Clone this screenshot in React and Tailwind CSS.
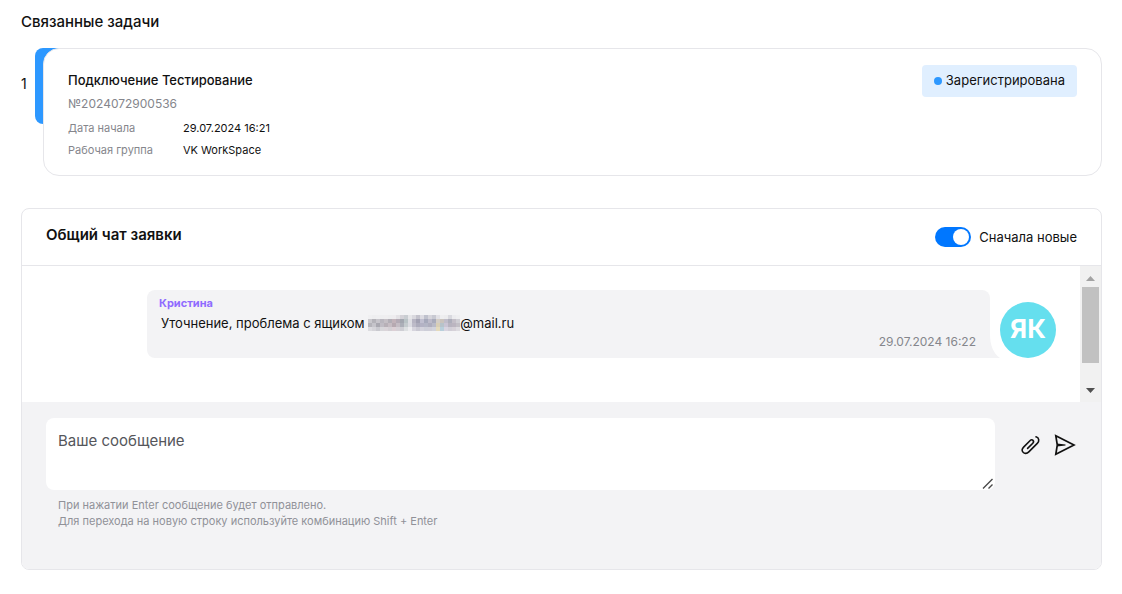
import { useState } from 'react';

const task = {
  title: 'Подключение Тестирование',
  number: '№2024072900536',
  status: 'Зарегистрирована',
  fields: [
    { label: 'Дата начала', value: '29.07.2024 16:21' },
    { label: 'Рабочая группа', value: 'VK WorkSpace' },
  ],
};

// mosaic that hides the first part of the address, 4px cells
const mosaic = [
  ['#f0f0f2', '#eeeef0', '#efeff1', '#eeeef0', '#efeef0', '#ededef', '#eeecef', '#e4e2e6', '#d4d2d8', '#c9cdd2', '#e6e6e9', '#d9d8de', '#c3c2cc', '#dcdbe2', '#bfc1cd', '#d6d5dc', '#c8c9d2', '#e2e1e6', '#eeeef0', '#ececee', '#d9d9df', '#ececef', '#efeff1'],
  ['#c9c8cd', '#b4b3b9', '#c6c4ca', '#b9b6be', '#c4bfc5', '#b2aeb6', '#c2b3ba', '#b3aab5', '#a3a7b0', '#b9c3c6', '#dedee3', '#b7b5c3', '#a2a1b2', '#c0bfd0', '#a6a9bb', '#bcbac9', '#a9abbb', '#d3cdc6', '#c9c3bd', '#bfbcc9', '#adaebb', '#c3bec7', '#cfced4'],
  ['#b5b4ba', '#c5c4ca', '#a9a8b0', '#c0bcc4', '#b7b0b7', '#c6bcc3', '#b6a9b1', '#c4bcc4', '#acafb8', '#c4cbce', '#dcdce2', '#bdbbc8', '#adacbc', '#b3b2c4', '#b3b5c5', '#aeadbd', '#b9bac7', '#d8ceb6', '#b7c3ca', '#c9c4d4', '#b7b3bf', '#bbb5c0', '#c2bfc6'],
  ['#dcdce0', '#d5d4d9', '#c9c9cf', '#d7d6da', '#dad4d9', '#d3cfd4', '#dccfd5', '#d5d0d6', '#ceced4', '#dde0e2', '#ededf0', '#d6d4dd', '#cac9d3', '#d3d2dc', '#cdced8', '#cfced8', '#d2d3dc', '#e4dabc', '#b8cfdb', '#d8d4e0', '#d1ced7', '#d6d1d8', '#dddbe0'],
];

function HiddenLogin() {
  return (
    <svg width="92" height="16" viewBox="0 0 92 16" className="shrink-0" aria-hidden="true">
      {mosaic.map((row, y) =>
        row.map((color, x) => (
          <rect key={`${x}-${y}`} x={x * 4} y={y * 4} width="4" height="4" fill={color} />
        ))
      )}
    </svg>
  );
}

function TaskCard({ index }) {
  return (
    <div className="flex">
      <span className="w-[22px] shrink-0 pt-[26px] text-sm leading-5">{index}</span>
      <div className="relative min-w-0 flex-1">
        <div className="absolute top-0 -left-2 h-[76px] w-8 rounded-lg rounded-br-none bg-[#2d98ff]" />
        <div className="relative flex items-start justify-between rounded-2xl border border-[#e6e6ea] bg-white px-6 pt-4 pb-[15px]">
          <div>
            <h3 className="pt-[5px] text-[13px] leading-5 font-medium">{task.title}</h3>
            <p className="mt-1 text-xs leading-5 text-[#85868c]">{task.number}</p>
            <dl className="mt-1 flex flex-col gap-[2px] text-[11px] leading-5">
              {task.fields.map((field) => (
                <div key={field.label} className="flex">
                  <dt className="w-[115px] text-[#85868c]">{field.label}</dt>
                  <dd>{field.value}</dd>
                </div>
              ))}
            </dl>
          </div>
          <span className="flex h-8 items-center gap-1 rounded bg-[#e0efff] px-3 text-[13px]">
            <span className="h-2 w-2 rounded-full bg-[#2d98ff]" />
            {task.status}
          </span>
        </div>
      </div>
    </div>
  );
}

function Toggle({ checked, onChange, children }) {
  return (
    <label className="flex cursor-pointer items-center gap-2 text-[13px] leading-5">
      <input
        type="checkbox"
        role="switch"
        checked={checked}
        onChange={onChange}
        className="peer sr-only"
      />
      <span className="flex h-5 w-9 items-center justify-start rounded-full bg-[#c4c8cc] p-[2px] peer-checked:justify-end peer-checked:bg-[#0077ff]">
        <span className="h-4 w-4 rounded-full bg-white" />
      </span>
      {children}
    </label>
  );
}

function Message() {
  return (
    <div className="flex flex-1 items-end self-start pt-6 pr-6 pl-[125px]">
      <div className="relative mr-[10px] flex h-[68px] min-w-0 flex-1 flex-col rounded-lg rounded-br-none bg-[#f3f3f5] pt-1 pr-[14px] pl-3">
        <p className="text-[11px] leading-[18px] font-bold text-[#8f6bff]">Кристина</p>
        <p className="flex items-center pl-[2px] text-[13px] leading-[22px]">
          <span>Уточнение, проблема с ящиком&nbsp;</span>
          <HiddenLogin />
          <span>@mail.ru</span>
        </p>
        <time className="self-end text-xs leading-4 text-[#85868c]">29.07.2024 16:22</time>
        <svg
          width="10"
          height="24"
          viewBox="0 0 10 24"
          className="absolute bottom-0 left-full"
          aria-hidden="true"
        >
          <path d="M0 0C0 11 3 19 10 24H0Z" fill="#f3f3f5" />
        </svg>
      </div>
      <div className="flex h-14 w-14 shrink-0 items-center justify-center rounded-full bg-[#65dfee] pb-1 text-[26px] font-bold text-white">
        ЯК
      </div>
    </div>
  );
}

function Scrollbar() {
  return (
    <div className="flex w-[21px] shrink-0 flex-col items-center bg-[#f1f1f1]">
      <button type="button" aria-label="Вверх" className="flex h-[21px] w-full items-center justify-center pt-1">
        <svg width="9" height="5" viewBox="0 0 9 5">
          <path d="M0 5L4.500 0L9 5Z" fill="#a3a3a3" />
        </svg>
      </button>
      <div className="h-[76px] w-[17px] bg-[#c1c1c1]" />
      <button type="button" aria-label="Вниз" className="mt-auto flex h-6 w-full items-center justify-center">
        <svg width="9" height="5" viewBox="0 0 9 5">
          <path d="M0 0H9L4.500 5Z" fill="#505050" />
        </svg>
      </button>
    </div>
  );
}

function MessageForm() {
  const [text, setText] = useState('');

  return (
    <form className="flex items-start bg-[#f3f3f5] pt-4 pr-[25px] pb-10 pl-6" onSubmit={(e) => e.preventDefault()}>
      <div className="min-w-0 flex-1">
        <div className="relative">
          <textarea
            id="message"
            aria-label="Ваше сообщение"
            placeholder="Ваше сообщение"
            value={text}
            onChange={(e) => setText(e.target.value)}
            className="block h-[72px] w-full resize-none rounded-lg bg-white px-3 py-3 text-[15px] leading-[22px] outline-none placeholder:text-[#55565b]"
          />
          <svg
            width="12"
            height="12"
            viewBox="0 0 12 12"
            className="absolute right-[1px] bottom-0"
            fill="none"
            stroke="#4a4a4a"
            strokeWidth="1.400"
            aria-hidden="true"
          >
            <path d="M1 10.500L10.500 1M6.500 10.500L10.500 6.500" />
          </svg>
        </div>
        <p className="px-3 pt-[7px] text-[11px] leading-4 text-[#909198]">
          При нажатии Enter сообщение будет отправлено.
          <br />
          Для перехода на новую строку используйте комбинацию Shift + Enter
        </p>
      </div>
      <div className="ml-[25px] flex gap-3 pt-4">
        <button type="button" aria-label="Прикрепить файл">
          <svg width="22" height="22" viewBox="0 0 22 22" fill="none" stroke="#111" strokeWidth="1.600" strokeLinecap="round" strokeLinejoin="round">
            <path d="M7.600 14.400L12.800 9.200C14.700 7.300 12.200 4.500 10.200 6.500L3.600 13.100C1.700 15 1.700 16.900 3.100 18.300C4.600 19.900 6.900 19.800 8.800 17.900L17.300 9.400C19.500 7.200 19.300 3.500 16 2.800" />
          </svg>
        </button>
        <button type="submit" aria-label="Отправить">
          <svg width="22" height="22" viewBox="0 0 22 22" fill="none" stroke="#111" strokeWidth="1.700" strokeLinejoin="miter">
            <path d="M1.800 1.700L20 11L1.800 20.300L3.300 11Z" />
            <path d="M3 9.400L11.500 10.500V11.500L3 12.600Z" fill="#111" stroke="none" />
          </svg>
        </button>
      </div>
    </form>
  );
}

export default function App() {
  const [newFirst, setNewFirst] = useState(true);

  return (
    <main className="bg-white pt-3 pr-5 pb-6 pl-[21px] font-['Inter','Noto_Sans',sans-serif] text-[#111]">
      <section>
        <h2 className="mb-4 text-[15px] leading-5 font-medium">Связанные задачи</h2>
        <TaskCard index={1} />
      </section>

      <section className="mt-8 overflow-hidden rounded-lg border border-[#e6e6ea]">
        <header className="flex h-[57px] items-center justify-between border-b border-[#e6e6ea] px-6">
          <h2 className="pb-1 text-[15px] leading-5 font-semibold">Общий чат заявки</h2>
          <Toggle checked={newFirst} onChange={() => setNewFirst(!newFirst)}>
            Сначала новые
          </Toggle>
        </header>
        <div className="flex h-[136px]">
          <Message />
          <Scrollbar />
        </div>
        <MessageForm />
      </section>
    </main>
  );
}
